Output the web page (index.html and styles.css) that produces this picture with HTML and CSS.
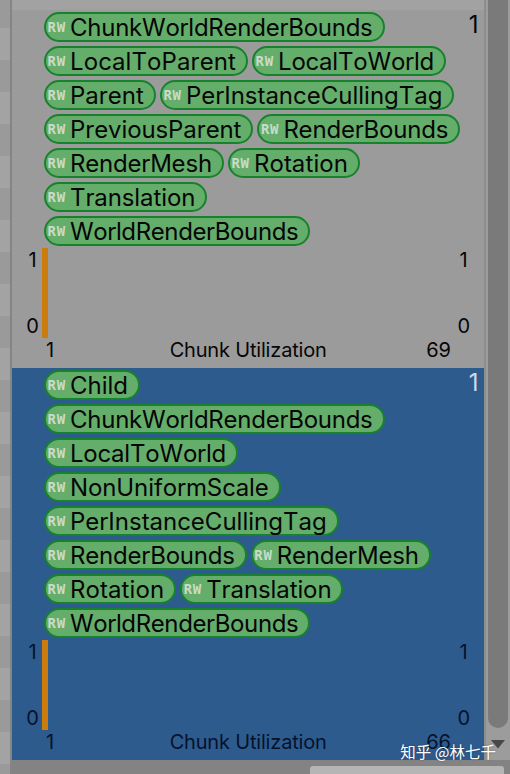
FILE: index.html
```html
<!DOCTYPE html>
<html lang="en">
<head>
<meta charset="utf-8">
<title>Chunk Utilization</title>
<link rel="stylesheet" href="styles.css">
</head>
<body>
<div class="window">
  <div class="rows"></div>
  <main class="list">
    <section class="archetype">
      <div class="chips">
        <div class="line"><span class="chip t3"><b>RW</b>ChunkWorldRenderBounds</span></div>
        <div class="line"><span class="chip wide"><b>RW</b>LocalToParent</span><span class="chip t2"><b>RW</b>LocalToWorld</span></div>
        <div class="line"><span class="chip"><b>RW</b>Parent</span><span class="chip"><b>RW</b>PerInstanceCullingTag</span></div>
        <div class="line"><span class="chip t1"><b>RW</b>PreviousParent</span><span class="chip t2"><b>RW</b>RenderBounds</span></div>
        <div class="line"><span class="chip t2"><b>RW</b>RenderMesh</span><span class="chip wide"><b>RW</b>Rotation</span></div>
        <div class="line"><span class="chip t1"><b>RW</b>Translation</span></div>
        <div class="line"><span class="chip t4"><b>RW</b>WorldRenderBounds</span></div>
      </div>
      <span class="count">1</span>
      <div class="chart">
        <div class="scale left"><span>1</span><span>0</span></div>
        <div class="bar"></div>
        <div class="scale right"><span>1</span><span>0</span></div>
      </div>
      <div class="axis"><span>1</span><span class="title">Chunk Utilization</span><span class="max">69</span></div>
    </section>
    <section class="archetype selected">
      <div class="chips">
        <div class="line"><span class="chip"><b>RW</b>Child</span></div>
        <div class="line"><span class="chip t3"><b>RW</b>ChunkWorldRenderBounds</span></div>
        <div class="line"><span class="chip t2"><b>RW</b>LocalToWorld</span></div>
        <div class="line"><span class="chip t1"><b>RW</b>NonUniformScale</span></div>
        <div class="line"><span class="chip"><b>RW</b>PerInstanceCullingTag</span></div>
        <div class="line"><span class="chip t2"><b>RW</b>RenderBounds</span><span class="chip t2"><b>RW</b>RenderMesh</span></div>
        <div class="line"><span class="chip wide"><b>RW</b>Rotation</span><span class="chip t1"><b>RW</b>Translation</span></div>
        <div class="line"><span class="chip t4"><b>RW</b>WorldRenderBounds</span></div>
      </div>
      <span class="count">1</span>
      <div class="chart">
        <div class="scale left"><span>1</span><span>0</span></div>
        <div class="bar"></div>
        <div class="scale right"><span>1</span><span>0</span></div>
      </div>
      <div class="axis"><span>1</span><span class="title">Chunk Utilization</span><span class="max">66</span></div>
    </section>
  </main>
  <aside class="scrollbar">
    <div class="thumb"></div>
    <svg class="arrow" width="14" height="9" viewBox="0 0 14 9"><path d="M0 0h14L7 8.5z" fill="#484848"/></svg>
  </aside>
  <footer class="bottom"><div class="hscroll"></div></footer>
  <div class="watermark">知乎 @林七千</div>
</div>
</body>
</html>
```
FILE: styles.css
```css
* { box-sizing: border-box; }
body {
  margin: 0;
  background: #a2a2a2;
  font-family: Inter, "Liberation Sans", sans-serif;
  color: #060606;
}
.window {
  position: relative;
  display: grid;
  grid-template: 760px 14px / 10px 474px 26px;
  width: 510px;
  height: 774px;
  overflow: hidden;
}
.rows {
  grid-row: 1 / 3;
  background: repeating-linear-gradient(#9a9a9a 0 32px, #a3a3a3 32px 64px) 0 -4px / 10px 896px;
}
.list {
  padding-top: 10px;
  border-left: 2px solid #858585;
}
.archetype {
  position: relative;
  height: 358px;
  padding: 2px 0 0 32px;
  background: #9b9b9b;
}
.selected {
  height: 392px;
  background: #2d5b8e;
}
.line {
  display: flex;
  gap: 4px;
  height: 34px;
}
.chip {
  display: flex;
  height: 30px;
  padding: 0 10px 0 2px;
  border: 2px solid #17822c;
  border-radius: 15px;
  background: #65ad6b;
  font-size: 24px;
  line-height: 28px;
  font-kerning: none;
  white-space: nowrap;
}
.wide { letter-spacing: 0.1px; }
.t1 { letter-spacing: -0.1px; }
.t2 { letter-spacing: -0.2px; }
.t3 { letter-spacing: -0.25px; }
.t4 { letter-spacing: -0.38px; }
.chip b {
  width: 22px;
  margin-left: -0.5px;
  margin-right: 0.5px;
  color: #c8dcc8;
  font: bold 14px/26px "DejaVu Sans Mono", monospace;
  letter-spacing: 0.7px;
}
.count {
  position: absolute;
  top: 0;
  right: 5.5px;
  font-size: 24px;
  line-height: 30px;
}
.selected .count { color: #cbd9ea; }
.chart {
  display: flex;
  height: 90px;
  margin: -2px 0 0 -32px;
}
.chart, .axis { font-size: 20px; }
.chart .scale {
  display: flex;
  flex-direction: column;
  justify-content: space-between;
  line-height: 24px;
  text-align: center;
}
.left {
  width: 30px;
  padding-left: 11px;
}
.right {
  margin-left: auto;
  padding-right: 14px;
}
.bar {
  width: 6px;
  background: #cc7c0c;
}
.axis {
  display: flex;
  padding: 0 33px 0 2px;
  line-height: 24px;
}
.title {
  margin: 0 auto;
  padding-left: 16px;
  letter-spacing: -0.18px;
}
.selected .chart, .selected .axis { color: #06122b; }
.scrollbar {
  display: flex;
  flex-direction: column;
  align-items: center;
  border-left: 2px solid #8d8d8d;
  background: #9c9c9c;
}
.thumb {
  width: 20px;
  height: 728px;
  border-radius: 0 0 10px 10px;
  background: #7a7a7a;
}
.arrow { margin-top: 12px; }
.bottom {
  grid-column: 2 / 4;
  padding-top: 6px;
  border-left: 2px solid #858585;
  background: #838383;
}
.hscroll {
  width: 194px;
  height: 12px;
  margin-left: 298px;
  border-radius: 3px;
  background: #b5b5b5;
}
.watermark {
  position: absolute;
  right: 14px;
  bottom: 11px;
  color: #fff;
  font: 15.5px/24px "Noto Sans CJK SC", sans-serif;
  text-shadow: 0 0 2px #0006;
  white-space: nowrap;
}
```
